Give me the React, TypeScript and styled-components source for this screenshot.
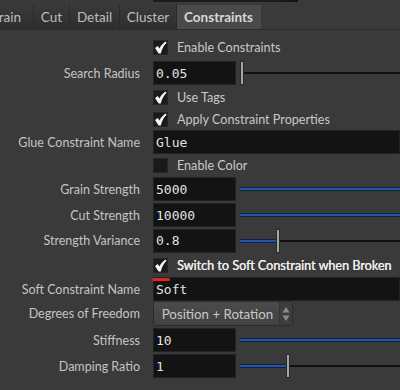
import React from "react";
import styled, { createGlobalStyle } from "styled-components";

const Global = createGlobalStyle`
  html, body { margin: 0; padding: 0; background: #3a3a3a; overflow: hidden; }
  body { font-family: "Lato", "Open Sans", sans-serif; }
`;

const Page = styled.div`
  width: 400px;
  height: 390px;
  background: #3a3a3a;
  position: relative;
  overflow: hidden;
`;

const TopStrip = styled.div`
  height: 5px;
  display: flex;
`;

const TopField = styled.div`
  margin-left: 153px;
  width: 145px;
  height: 2px;
  background: #1b1b1b;
  border-right: 11px solid #151515;
  box-sizing: border-box;
`;

const TabBar = styled.div`
  display: flex;
  height: 24px;
  border-bottom: 1px solid #2c2c2c;
  background: #3a3a3a;
  overflow: hidden;
`;

const Tab = styled.div<{ $w: number; $active?: boolean; $clip?: number }>`
  width: ${(p) => p.$w}px;
  flex: none;
  box-sizing: border-box;
  display: flex;
  align-items: center;
  justify-content: ${(p) => (p.$clip ? "flex-end" : "center")};
  padding-right: ${(p) => p.$clip ?? 0}px;
  font-size: 13.5px;
  color: ${(p) => (p.$active ? "#d8d8d8" : "#bdbdbd")};
  font-weight: ${(p) => (p.$active ? 700 : 400)};
  background: ${(p) =>
    p.$active ? "#4a4a4a" : "linear-gradient(#393939, #2f2f2f)"};
  border-right: 1px solid ${(p) => (p.$active ? "#4a4a4a" : "#2a2a2a")};
  white-space: nowrap;
  overflow: hidden;
`;

const Form = styled.div`
  padding-top: 5px;
  display: flex;
  flex-direction: column;
`;

const Row = styled.div<{ $h: number }>`
  height: ${(p) => p.$h}px;
  display: grid;
  grid-template-columns: 140px 1fr;
  column-gap: 13px;
  align-items: center;
  position: relative;
`;

const Label = styled.div`
  text-align: right;
  font-size: 12.5px;
  color: #c4c4c4;
  white-space: nowrap;
`;

const Field = styled.div`
  display: flex;
  align-items: center;
  height: 100%;
  min-width: 0;
`;

const CheckWrap = styled.div`
  display: flex;
  align-items: center;
  gap: 9px;
`;

const Box = styled.div`
  width: 15px;
  height: 15px;
  box-sizing: border-box;
  background: #1a1a1a;
  border: 1px solid #262626;
  display: flex;
  align-items: center;
  justify-content: center;
`;

const CheckText = styled.span<{ $bright?: boolean }>`
  font-size: 12.6px;
  color: ${(p) => (p.$bright ? "#ececec" : "#c8c8c8")};
  text-shadow: ${(p) => (p.$bright ? "0.3px 0 0 #ececec" : "none")};
  white-space: nowrap;
`;

const Input = styled.div<{ $full?: boolean }>`
  width: ${(p) => (p.$full ? "auto" : "83px")};
  flex: ${(p) => (p.$full ? 1 : "none")};
  height: 24px;
  box-sizing: border-box;
  background: #131313;
  border: 1px solid #222;
  color: #e2e2e2;
  font-family: "DejaVu Sans Mono", "Liberation Mono", monospace;
  font-size: 13px;
  display: flex;
  align-items: center;
  padding-left: 2px;
`;

const Slider = styled.div`
  flex: 1;
  margin-left: 4px;
  height: 100%;
  position: relative;
  display: flex;
  align-items: center;
`;

const Track = styled.div`
  flex: 1;
  height: 2px;
  background: #101010;
  position: relative;
`;

const Fill = styled.div`
  position: absolute;
  left: 0;
  top: -1px;
  height: 4px;
  box-sizing: border-box;
  background: #2557a6;
  border-top: 1px solid #10223f;
  border-bottom: 1px solid #10223f;
`;

const Handle = styled.div`
  position: absolute;
  top: 50%;
  width: 4px;
  height: 24px;
  margin-top: -12px;
  box-sizing: border-box;
  background: linear-gradient(90deg, #7a7a7a, #c4c4c4 45%, #8a8a8a);
  border: 1px solid #2a2a2a;
`;

const Dropdown = styled.div`
  width: 140px;
  height: 25px;
  box-sizing: border-box;
  background: linear-gradient(#4b4b4b, #424242);
  border: 1px solid #2b2b2b;
  border-radius: 2px;
  display: flex;
  align-items: center;
  font-size: 13.3px;
  color: #c8c8c8;
`;

const DropText = styled.span`
  flex: 1;
  text-align: center;
  padding-left: 2px;
  white-space: nowrap;
`;

const DropArrows = styled.div`
  width: 12px;
  height: 100%;
  display: flex;
  align-items: center;
  justify-content: center;
  background: #3d3d3d;
  border-left: 1px solid #353535;
`;

const RedMark = styled.div`
  position: absolute;
  left: 152px;
  top: 1px;
  width: 18px;
  height: 3px;
  border-radius: 2px;
  background: #e3231e;
`;

const Tick = () => (
  <svg width="13" height="13" viewBox="0 0 13 13">
    <path
      d="M1 7 L3.8 5 L5.4 7.6 C6.9 4.6 9 2.2 11.8 0.6 L12.6 1.8 C10 4.2 8 7.6 6.8 12.4 L4.6 12.4 Z"
      fill="#f4f4f4"
    />
  </svg>
);

const Check = ({ on, text, bright }: { on: boolean; text: string; bright?: boolean }) => (
  <CheckWrap>
    <Box>{on && <Tick />}</Box>
    <CheckText $bright={bright}>{text}</CheckText>
  </CheckWrap>
);

const SliderCtl = ({ fill, handle }: { fill?: number | "full"; handle?: number }) => (
  <Slider>
    <Track>
      {fill !== undefined && (
        <Fill style={{ width: fill === "full" ? "100%" : `${fill}px` }} />
      )}
    </Track>
    {handle !== undefined && <Handle style={{ left: `${handle}px` }} />}
  </Slider>
);

const Arrows = () => (
  <svg width="8" height="16" viewBox="0 0 8 16">
    <path d="M4 1 L7.5 6.5 L0.5 6.5 Z" fill="#8c8c8c" />
    <path d="M4 15 L7.5 9.5 L0.5 9.5 Z" fill="#8c8c8c" />
  </svg>
);

export default function App() {
  return (
    <Page>
      <Global />
      <TopStrip>
        <TopField />
      </TopStrip>
      <TabBar>
        <Tab $w={34} $clip={12}>Grain</Tab>
        <Tab $w={36}>Cut</Tab>
        <Tab $w={50}>Detail</Tab>
        <Tab $w={57}>Cluster</Tab>
        <Tab $w={84} $active>Constraints</Tab>
      </TabBar>
      <Form>
        <Row $h={25}>
          <span />
          <Check on text="Enable Constraints" />
        </Row>
        <Row $h={26}>
          <Label>Search Radius</Label>
          <Field>
            <Input>0.05</Input>
            <SliderCtl handle={0} />
          </Field>
        </Row>
        <Row $h={22}>
          <span />
          <Check on text="Use Tags" />
        </Row>
        <Row $h={22}>
          <span />
          <Check on text="Apply Constraint Properties" />
        </Row>
        <Row $h={24}>
          <Label>Glue Constraint Name</Label>
          <Field>
            <Input $full>Glue</Input>
          </Field>
        </Row>
        <Row $h={22}>
          <span />
          <Check on={false} text="Enable Color" />
        </Row>
        <Row $h={26}>
          <Label>Grain Strength</Label>
          <Field>
            <Input>5000</Input>
            <SliderCtl fill="full" />
          </Field>
        </Row>
        <Row $h={26}>
          <Label>Cut Strength</Label>
          <Field>
            <Input>10000</Input>
            <SliderCtl fill="full" />
          </Field>
        </Row>
        <Row $h={25}>
          <Label>Strength Variance</Label>
          <Field>
            <Input>0.8</Input>
            <SliderCtl fill={37} handle={36} />
          </Field>
        </Row>
        <Row $h={24}>
          <span />
          <Check on bright text="Switch to Soft Constraint when Broken" />
        </Row>
        <Row $h={23}>
          <Label>Soft Constraint Name</Label>
          <Field>
            <Input $full>Soft</Input>
          </Field>
          <RedMark />
        </Row>
        <Row $h={27}>
          <Label>Degrees of Freedom</Label>
          <Field>
            <Dropdown>
              <DropText>Position + Rotation</DropText>
              <DropArrows>
                <Arrows />
              </DropArrows>
            </Dropdown>
          </Field>
        </Row>
        <Row $h={26}>
          <Label>Stiffness</Label>
          <Field>
            <Input>10</Input>
            <SliderCtl fill="full" />
          </Field>
        </Row>
        <Row $h={26}>
          <Label>Damping Ratio</Label>
          <Field>
            <Input>1</Input>
            <SliderCtl fill={47} handle={46} />
          </Field>
        </Row>
      </Form>
    </Page>
  );
}
